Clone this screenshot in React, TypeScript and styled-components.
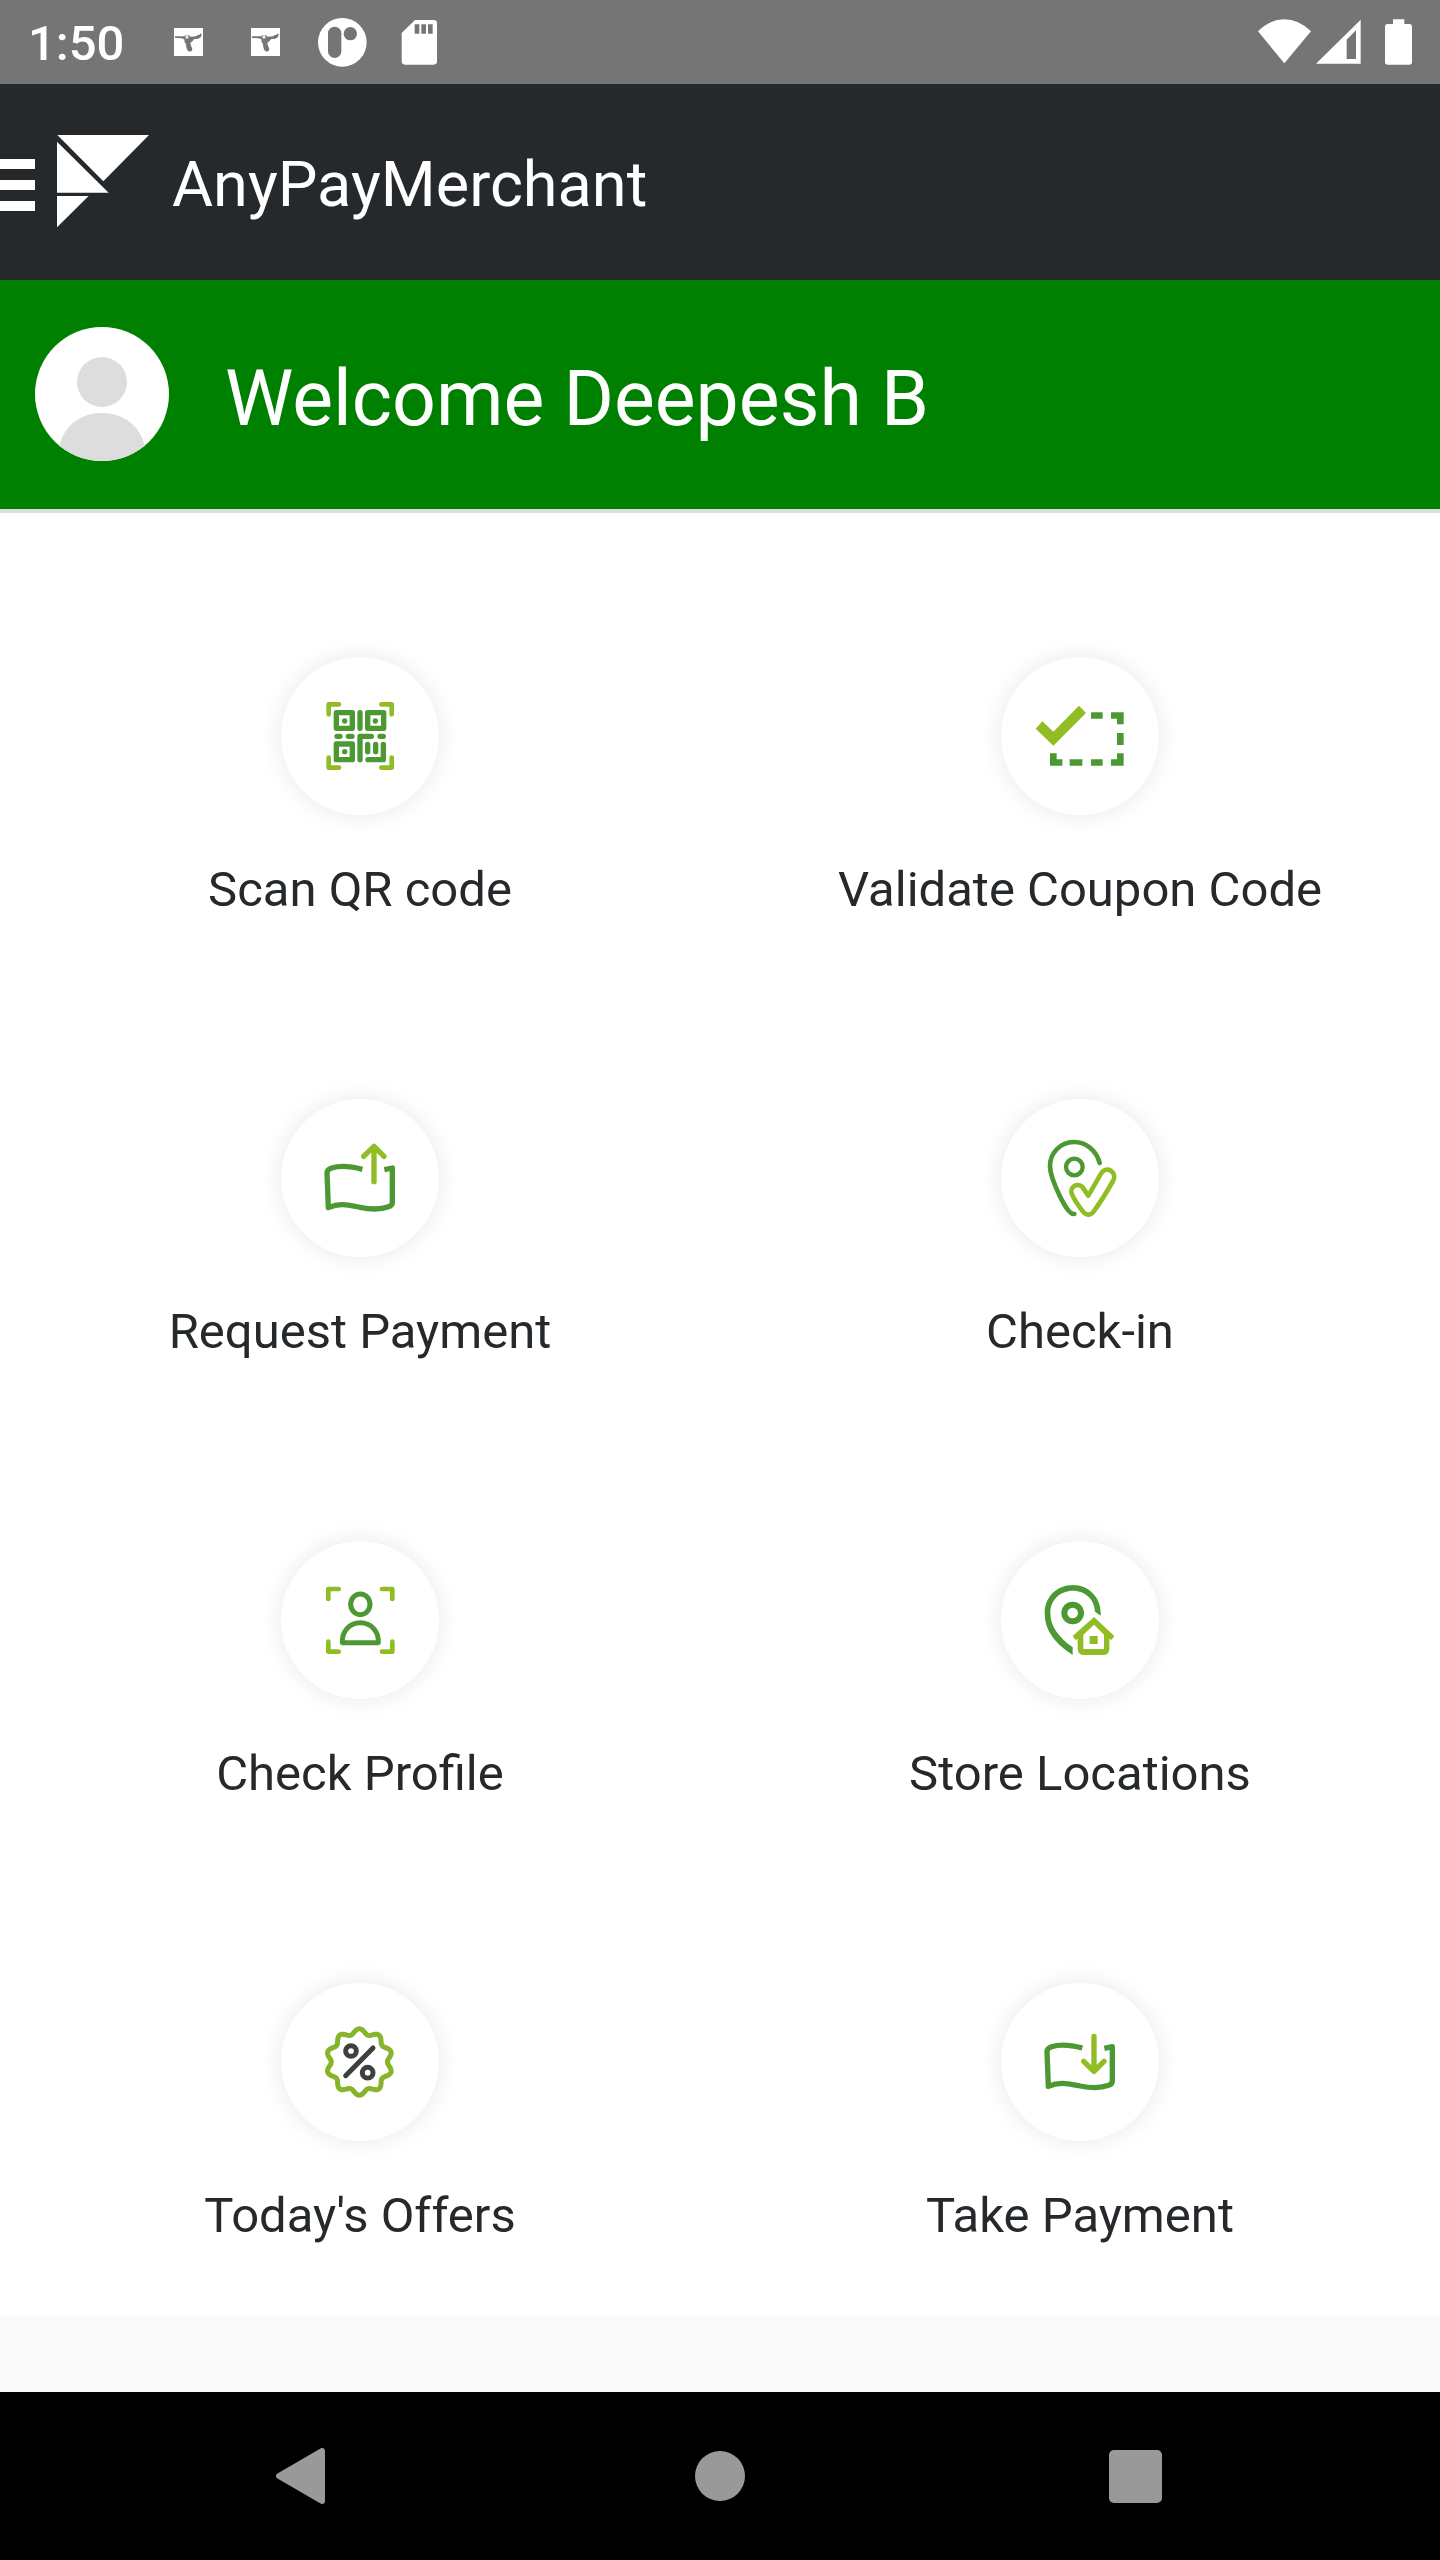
import React from 'react';
import styled, { createGlobalStyle } from 'styled-components';

const DARK = '#4c9934';
const LIGHT = '#90bd24';

const GlobalStyle = createGlobalStyle`
  * { box-sizing: border-box; }
  body {
    margin: 0;
    background: #fafafa;
    font-family: Roboto, "Liberation Sans", sans-serif;
  }
  button {
    margin: 0;
    padding: 0;
    border: 0;
    background: none;
    color: inherit;
    font: inherit;
    cursor: pointer;
  }
`;

const Screen = styled.div`
  display: flex;
  flex-direction: column;
  min-height: 100vh;
`;

const StatusBar = styled.div`
  display: flex;
  align-items: center;
  justify-content: space-between;
  height: 84px;
  padding: 0 28px;
  background: #757575;
  color: #fff;
`;

const StatusGroup = styled.div<{ $gap?: number }>`
  display: flex;
  align-items: center;
  gap: ${(p) => p.$gap ?? 0}px;
`;

const Clock = styled.time`
  width: 122px;
  padding-top: 4px;
  font-size: 49px;
  font-weight: 500;
  line-height: 58px;
`;

const StatusIcon = styled.svg<{ $width: number }>`
  display: block;
  width: ${(p) => p.$width}px;
  height: 84px;
  fill: #fff;
`;

const Toolbar = styled.header`
  display: flex;
  align-items: center;
  height: 196px;
  padding-top: 6px;
  background: #25292c;
  color: #fff;
`;

const MenuButton = styled.button`
  display: flex;
  flex-direction: column;
  justify-content: center;
  gap: 11px;
  width: 35px;
  height: 84px;
`;

const MenuBar = styled.span`
  height: 10px;
  background: #fff;
`;

const Logo = styled.svg`
  width: 92px;
  height: 100px;
  margin: 0 23px 0 22px;
  fill: #fff;
`;

const Title = styled.h1`
  margin: 0;
  font-size: 63px;
  font-weight: 400;
  line-height: 74px;
`;

const Welcome = styled.section`
  display: flex;
  align-items: center;
  gap: 56px;
  height: 233px;
  padding: 0 35px 2px;
  border-bottom: 4px solid #ddd;
  background: #008000;
  color: #fff;
`;

const Avatar = styled.svg`
  width: 134px;
  height: 134px;
  border-radius: 50%;
  background: #fff;
  fill: #ddd;
`;

const Greeting = styled.h2`
  margin: 0;
  padding-top: 10px;
  font-size: 77px;
  font-weight: 400;
  line-height: 90px;
`;

const Actions = styled.main`
  display: grid;
  grid-template-columns: repeat(2, 1fr);
  padding-bottom: 35px;
  background: #fff;
`;

const Tile = styled.button`
  display: flex;
  flex-direction: column;
  align-items: center;
  gap: 46px;
  padding: 144px 0 36px;
  color: #25292c;
`;

const Disc = styled.span`
  width: 158px;
  height: 158px;
  border-radius: 50%;
  background: #fff;
  box-shadow: 0 0 24px rgba(0, 0, 0, 0.09);
`;

const Glyph = styled.svg`
  display: block;
  width: 100%;
  height: 100%;
  fill: none;
  stroke-linecap: round;
  stroke-linejoin: round;
`;

const Label = styled.span`
  font-size: 49px;
  line-height: 58px;
`;

const NavBar = styled.nav`
  display: grid;
  grid-template-columns: repeat(3, 1fr);
  align-items: center;
  height: 168px;
  margin-top: auto;
  padding: 0 97px;
  background: #000;
`;

const NavButton = styled.button`
  display: flex;
  align-items: center;
  justify-content: center;
  height: 168px;
`;

const NavIcon = styled.svg`
  width: 84px;
  height: 84px;
  fill: #999;
  stroke: #999;
  stroke-linejoin: round;
`;

const PistolIcon = () => (
  <StatusIcon $width={77} viewBox="450 0 231 252" aria-hidden="true">
    <rect x="522" y="84" width="87" height="84" />
    <g fill="#757575">
      <path d="M525 109h28l4-3h10l5 4 16-1 5-4 6-1 4-4 2 2-2 9-8 5-12 1-6 7-6 4 2 9 4 9-2 7-6 2-7-4-3-9-1-10-4-5-1-9-8-3-20-1z" />
      <circle cx="561" cy="111" r="5" fill="#eee" />
    </g>
  </StatusIcon>
);

const Corners = ({ x1, y1, x2, y2 }: { x1: number; y1: number; x2: number; y2: number }) => (
  <path
    stroke={LIGHT}
    strokeWidth="14"
    d={`M${x1} ${y1 + 30}V${y1}H${x1 + 31}M${x2 - 31} ${y1}H${x2}V${y1 + 30}M${x1} ${y2 - 30}V${y2}H${x1 + 31}M${x2 - 31} ${y2}H${x2}V${y2 - 30}`}
  />
);

const QrGlyph = () => (
  <Glyph viewBox="34 36 474 474">
    <Corners x1={177} y1={178} x2={366} y2={368} />
    <g stroke={DARK} strokeWidth="16">
      <rect x="200" y="203" width="48" height="47" />
      <rect x="294" y="203" width="48" height="47" />
      <rect x="200" y="297" width="48" height="47" />
      <path d="M271 203V250M202 274H211M236 274H247M331 274H341M271 344V274H305M294 298V320M318 298V320M341 298V344H295" />
    </g>
    <g fill={DARK}>
      <circle cx="225" cy="228" r="8" />
      <circle cx="317" cy="228" r="8" />
      <circle cx="225" cy="320" r="8" />
    </g>
  </Glyph>
);

const CouponGlyph = () => (
  <Glyph viewBox="34 36 474 474">
    <path fill={LIGHT} d="M138 251L158 229L191 260L268 182L289 204L191 302Z" />
    <path
      fill={DARK}
      d="M304 202h35v19h-35zM364 202h38v36h-20v-17h-18zM382 264h20v36h-20zM402 325v37h-38v-19h18v-18zM304 343h35v19h-35zM240 343h38v19h-38zM181 325h20v18h17v19h-37z"
    />
  </Glyph>
);

const PaymentGlyph = ({ incoming = false }: { incoming?: boolean }) => (
  <Glyph viewBox={incoming ? '34 52 474 474' : '34 36 474 474'}>
    <path
      stroke={DARK}
      strokeWidth="16"
      strokeLinecap="butt"
      d="M278 247C245 238 211 235 186 243Q172 248 172 257L176 362C210 347 235 354 271 361C305 368 336 367 357 359Q368 355 368 346V243L344 248"
    />
    <path
      stroke={LIGHT}
      strokeWidth="16"
      d={incoming ? 'M313 212V317M282 287L313 317L343 287' : 'M313 284V178M282 208L313 178L343 208'}
    />
  </Glyph>
);

const CheckInGlyph = () => (
  <Glyph viewBox="34 36 474 474">
    <path
      stroke={DARK}
      strokeWidth="14"
      d="M330 228C320 190 289 165 253 165C211 165 181 199 181 237C181 265 196 297 210 326C223 352 238 382 254 381"
    />
    <circle cx="254" cy="240" r="25" stroke={DARK} strokeWidth="13" />
    <path
      stroke={LIGHT}
      strokeWidth="14"
      d="M296 326L279 301C265 284 237 301 247 322C255 342 270 361 282 376Q296 390 310 376C333 345 352 314 370 282C385 256 350 233 334 260Z"
    />
  </Glyph>
);

const ProfileGlyph = () => (
  <Glyph viewBox="34 33 474 474">
    <Corners x1={176} y1={177} x2={368} y2={365} />
    <g stroke={DARK} strokeWidth="15">
      <ellipse cx="272" cy="223" rx="29" ry="31" />
      <path d="M218 338C216 305 239 278 272 278S328 305 326 338Z" />
    </g>
  </Glyph>
);

const StoreGlyph = () => (
  <Glyph viewBox="34 33 474 474">
    <path
      fill={DARK}
      d="M333 257V248C333 201 296 165 250 165C201 165 165 202 165 249C165 304 198 341 249 375V352C206 320 182 289 182 248C182 210 212 182 250 182C287 182 315 209 316 245Z"
    />
    <circle cx="249" cy="249" r="25" stroke={DARK} strokeWidth="18" />
    <path
      fill={LIGHT}
      fillRule="evenodd"
      d="M313 261L374 318L366 329L359 327V356Q358 375 341 375H283Q265 375 264 356V327L257 329L249 318ZM313 284L281 314V357H343V314Z"
    />
    <path fill={LIGHT} d="M300 318h24v24h-24z" />
  </Glyph>
);

/* Outline of the ten-lobed offer seal. */
const sealPath = (() => {
  const points: string[] = [];
  for (let deg = 0; deg < 360; deg += 3) {
    const t = (deg * Math.PI) / 180;
    const r = 92 + 8 * Math.cos(10 * t);
    points.push(`${(269 + r * Math.sin(t)).toFixed(1)} ${(271 - r * Math.cos(t)).toFixed(1)}`);
  }
  return `M${points.join('L')}Z`;
})();

const OffersGlyph = () => (
  <Glyph viewBox="34 34 474 474">
    <path stroke="#86b52b" strokeWidth="15" d={sealPath} />
    <g stroke="#3d413d" strokeWidth="15">
      <circle cx="244" cy="238" r="16" />
      <circle cx="294" cy="303" r="16" />
      <path d="M310 229L228 312" />
    </g>
  </Glyph>
);

const actions = [
  { label: 'Scan QR code', icon: <QrGlyph /> },
  { label: 'Validate Coupon Code', icon: <CouponGlyph /> },
  { label: 'Request Payment', icon: <PaymentGlyph /> },
  { label: 'Check-in', icon: <CheckInGlyph /> },
  { label: 'Check Profile', icon: <ProfileGlyph /> },
  { label: 'Store Locations', icon: <StoreGlyph /> },
  { label: "Today's Offers", icon: <OffersGlyph /> },
  { label: 'Take Payment', icon: <PaymentGlyph incoming /> },
];

export default function App() {
  return (
    <Screen>
      <GlobalStyle />
      <StatusBar>
        <StatusGroup>
          <Clock>1:50</Clock>
          <PistolIcon />
          <PistolIcon />
          <StatusIcon $width={77} viewBox="912 0 231 252" aria-hidden="true">
            <circle cx="1027" cy="127" r="73" />
            <rect x="984" y="80" width="40" height="94" rx="20" fill="#757575" />
            <circle cx="1051" cy="101" r="20" fill="#757575" />
          </StatusIcon>
          <StatusIcon $width={77} viewBox="1143 0 231 252" aria-hidden="true">
            <path d="M1245 60H1301Q1311 60 1311 70V184Q1311 194 1301 194H1215Q1205 194 1205 184V99Z" />
            <path fill="#757575" d="M1244 73h14v28h-14zM1264 73h14v28h-14zM1284 73h14v28h-14z" />
          </StatusIcon>
        </StatusGroup>
        <StatusGroup $gap={5}>
          <StatusIcon $width={53} viewBox="114 0 159 252" aria-hidden="true">
            <path d="M193 190L114 94Q150 58 193 58T273 94Z" />
          </StatusIcon>
          <StatusIcon $width={64} viewBox="286 0 192 252" aria-hidden="true">
            <path fillRule="evenodd" d="M286 191L420 59V191ZM378 119V177H406V91Z" />
          </StatusIcon>
          <StatusIcon $width={27} viewBox="495 0 81 252" aria-hidden="true">
            <path d="M519 58h34v14h15q8 0 8 8v106q0 8-8 8h-65q-8 0-8-8V80q0-8 8-8h16z" />
          </StatusIcon>
        </StatusGroup>
      </StatusBar>

      <Toolbar>
        <MenuButton aria-label="Menu">
          <MenuBar />
          <MenuBar />
          <MenuBar />
        </MenuButton>
        <Logo viewBox="172 402 276 300" aria-hidden="true">
          <path d="M173 402H448L311 541ZM172 422L327 575H172ZM172 585H267L172 679Z" />
        </Logo>
        <Title>AnyPayMerchant</Title>
      </Toolbar>

      <Welcome>
        <Avatar viewBox="0 0 134 134" aria-hidden="true">
          <circle cx="67" cy="55" r="25" />
          <path d="M24 134V120C29 98 46 86 67 86S105 98 110 120V134Z" />
        </Avatar>
        <Greeting>Welcome Deepesh B</Greeting>
      </Welcome>

      <Actions>
        {actions.map(({ label, icon }) => (
          <Tile key={label}>
            <Disc>{icon}</Disc>
            <Label>{label}</Label>
          </Tile>
        ))}
      </Actions>

      <NavBar>
        <NavButton aria-label="Back">
          <NavIcon viewBox="0 0 84 84" strokeWidth="6">
            <path d="M16 42L59 17V67Z" />
          </NavIcon>
        </NavButton>
        <NavButton aria-label="Home">
          <NavIcon viewBox="0 0 84 84" strokeWidth="0">
            <circle cx="42" cy="42" r="25" />
          </NavIcon>
        </NavButton>
        <NavButton aria-label="Recent apps">
          <NavIcon viewBox="0 0 84 84" strokeWidth="0">
            <rect x="16" y="16" width="53" height="53" rx="5" />
          </NavIcon>
        </NavButton>
      </NavBar>
    </Screen>
  );
}
